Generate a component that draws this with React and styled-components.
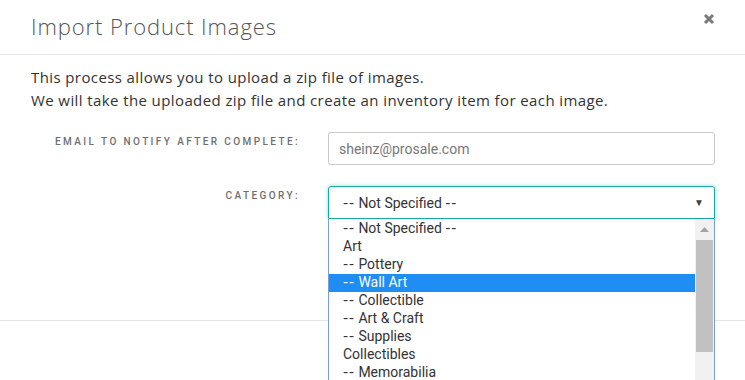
import React from 'react';
import styled, { createGlobalStyle } from 'styled-components';

const GlobalStyle = createGlobalStyle`
  html, body {
    margin: 0;
    padding: 0;
    background: #fff;
    overflow: hidden;
  }
  * { box-sizing: border-box; }
`;

const Modal = styled.div`
  position: relative;
  width: 745px;
  height: 380px;
  background: #fff;
  font-family: Roboto, "Liberation Sans", sans-serif;
  color: #333;
`;

const Header = styled.div`
  display: flex;
  justify-content: space-between;
  align-items: flex-start;
  height: 55px;
  padding: 11px 30px 0 31px;
  border-bottom: 1px solid #e5e5e5;
`;

const Title = styled.h4`
  margin: 0;
  font-family: "Open Sans", sans-serif;
  font-weight: 300;
  font-size: 22px;
  letter-spacing: 0.9px;
  color: #555;
`;

const Close = styled.button`
  border: 0;
  background: none;
  padding: 0;
  margin-top: 2px;
  width: 12px;
  height: 12px;
  display: flex;
`;

const Body = styled.div`
  height: 266px;
  padding: 11px 30px 0 31px;
  border-bottom: 1px solid #e5e5e5;
`;

const Intro = styled.p`
  margin: 0 0 20px;
  font-family: "Open Sans", sans-serif;
  font-size: 15px;
  line-height: 23px;
  letter-spacing: 0.4px;
  color: #333;
`;

const Form = styled.div`
  display: grid;
  grid-template-columns: 267px 387px;
  column-gap: 30px;
  row-gap: 21px;
  align-items: start;
`;

const Label = styled.label`
  text-align: right;
  font-size: 10px;
  font-weight: 500;
  letter-spacing: 2.4px;
  text-transform: uppercase;
  color: #6f6f6f;
  padding-top: 4px;
  margin-right: -2px;
`;

const Input = styled.div`
  height: 33px;
  border: 1px solid #c8c8c8;
  border-radius: 3px;
  padding: 0 10px;
  display: flex;
  align-items: center;
  font-size: 14px;
  color: #777;
`;

const Field = styled.div`
  position: relative;
`;

const Select = styled.div`
  height: 33px;
  border: 1px solid #1aa9a9;
  border-radius: 3px 3px 0 0;
  box-shadow: 0 0 4px rgba(26, 169, 169, 0.45);
  padding: 0 10px 0 14px;
  display: flex;
  align-items: center;
  justify-content: space-between;
  font-size: 14px;
  color: #333;
`;

const Caret = styled.span`
  font-size: 10px;
  color: #444;
`;

const List = styled.ul`
  position: absolute;
  top: 33px;
  left: 0;
  width: 387px;
  height: 170px;
  margin: 0;
  padding: 0;
  list-style: none;
  background: #fff;
  border: 1px solid #7b9ed6;
  border-top: 0;
  display: flex;
  overflow: hidden;
`;

const Options = styled.div`
  flex: 1;
  padding-top: 1px;
`;

const Option = styled.li`
  height: 18px;
  line-height: 16px;
  padding-left: 14px;
  font-size: 14px;
  white-space: pre;
  color: ${(p) => (p.$active ? '#fff' : '#333')};
  background: ${(p) => (p.$active ? '#1e8ef5' : 'transparent')};
`;

const Dash = styled.span`
  font-family: "DejaVu Sans", sans-serif;
  letter-spacing: 0.9px;
`;

const Scrollbar = styled.div`
  width: 19px;
  background: #f1f1f1;
  display: flex;
  flex-direction: column;
  align-items: center;
`;

const ScrollArrow = styled.div`
  height: 21px;
  display: flex;
  align-items: center;
  justify-content: center;
`;

const Thumb = styled.div`
  width: 17px;
  height: 112px;
  background: #c1c1c1;
`;

const options = [
  '-- Not Specified --',
  'Art',
  '-- Pottery',
  '-- Wall Art',
  '-- Collectible',
  '-- Art & Craft',
  '-- Supplies',
  'Collectibles',
  '-- Memorabilia',
];

// hyphens in the reference font are wider than Roboto's
const withDashes = (text) =>
  text.split(/(--)/).map((part, i) =>
    part === '--' ? <Dash key={i}>--</Dash> : part
  );

export default function App() {
  return (
    <Modal>
      <GlobalStyle />
      <Header>
        <Title>Import Product Images</Title>
        <Close aria-label="Close">
          <svg width="12" height="12" viewBox="0 0 12 12">
            <path d="M2 2 L10 10 M10 2 L2 10" stroke="#7a7a7a" strokeWidth="3" strokeLinecap="butt" />
          </svg>
        </Close>
      </Header>
      <Body>
        <Intro>
          This process allows you to upload a zip file of images.
          <br />
          We will take the uploaded zip file and create an inventory item for each image.
        </Intro>
        <Form>
          <Label>Email to notify after complete:</Label>
          <Input>sheinz@prosale.com</Input>
          <Label>Category:</Label>
          <Field>
            <Select>
              <span>{withDashes('-- Not Specified --')}</span>
              <Caret>▼</Caret>
            </Select>
            <List>
              <Options>
                {options.map((o) => (
                  <Option key={o} $active={o === '-- Wall Art'}>
                    {withDashes(o)}
                  </Option>
                ))}
              </Options>
              <Scrollbar>
                <ScrollArrow>
                  <svg width="9" height="5" viewBox="0 0 9 5">
                    <path d="M0 5 L4.5 0 L9 5 Z" fill="#a3a3a3" />
                  </svg>
                </ScrollArrow>
                <Thumb />
              </Scrollbar>
            </List>
          </Field>
        </Form>
      </Body>
    </Modal>
  );
}
